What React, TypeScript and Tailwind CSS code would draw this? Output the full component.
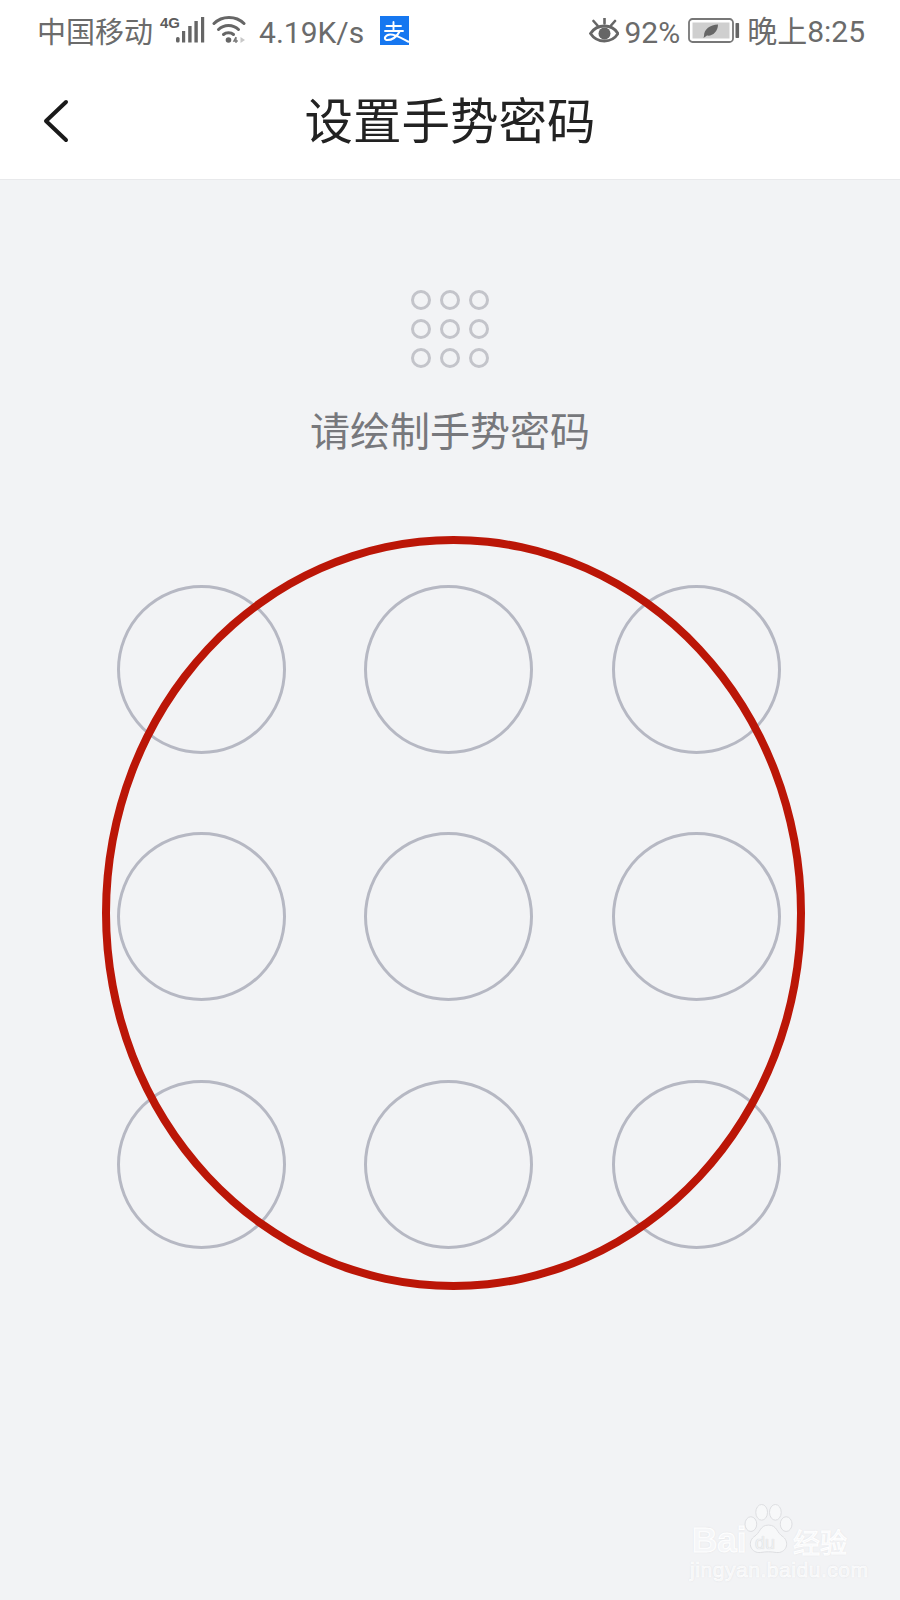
const cjk = "font-['Roboto','Noto_Sans_CJK_SC',sans-serif]";

function Signal() {
  return (
    <div className="relative w-[46px] h-[30px]">
      <span className="absolute left-0 top-[0px] text-[15px] leading-[14px] font-bold text-[#5c5c5c] font-['Liberation_Sans_Narrow','Liberation_Sans',sans-serif]">4G</span>
      <svg viewBox="0 0 46 30" className="absolute inset-0 w-[46px] h-[30px]" fill="#666">
        <rect x="16" y="21" width="3.6" height="5.5" rx="1.6" />
        <rect x="22" y="15" width="3.2" height="11.5" />
        <rect x="28.2" y="10" width="3.4" height="16.5" />
        <rect x="34.4" y="5" width="3.4" height="21.5" />
        <rect x="41" y="1" width="3.2" height="25.5" />
      </svg>
    </div>
  );
}

function Wifi() {
  return (
    <svg viewBox="0 0 36 30" className="w-[36px] h-[30px]" fill="none" stroke="#666" strokeWidth="3" strokeLinecap="round">
      <path d="M2 7.5 C10 -0.5 24 -0.5 32 7.5" />
      <path d="M6.5 13.5 C12 8 21 8 26.5 13.5" />
      <path d="M11.5 18.5 C14 16.3 19 16.3 21.5 18.5" />
      <circle cx="16.5" cy="24" r="2.8" fill="#666" stroke="none" />
      <path d="M24 27 L24 21 M25.8 25 L21.8 25 L24 21" strokeWidth="1.3" stroke="#777" strokeLinecap="butt" />
      <path d="M28.5 21 L33 24 L28.5 27 Z" fill="#c8c8c8" stroke="none" />
    </svg>
  );
}

function Alipay() {
  return (
    <svg viewBox="0 0 29 29" className="w-[29px] h-[29px]" fill="none" stroke="#fff" strokeWidth="1.9" strokeLinecap="round">
      <rect x="0" y="0" width="29" height="29" fill="#1677f0" stroke="none" />
      <path d="M13.5 6 V15" />
      <path d="M6.5 10 H21" />
      <path d="M5 15 H23" />
      <path d="M19.5 15.5 C17 21 11.5 24.5 6.5 24 C3.5 23 5 19 10 18.5 C15 18 23 23 29 26" strokeWidth="2.1" strokeLinecap="butt" />
    </svg>
  );
}

function Eye() {
  return (
    <svg viewBox="0 0 30 26" className="w-[30px] h-[26px]" fill="none" stroke="#666">
      <path d="M1.5 15.5 C8 5.5 23 5.5 29 15.5 C23 25.5 8 25.5 1.5 15.5 Z" strokeWidth="2.8" />
      <circle cx="15.5" cy="15.5" r="6" fill="#666" stroke="none" />
      <path d="M4.5 3 L8.5 7.5 M15.5 0 L15.5 5.5 M26 3 L22 7.5" strokeWidth="2.6" strokeLinecap="round" />
    </svg>
  );
}

function Battery() {
  return (
    <svg viewBox="0 0 52 26" className="w-[52px] h-[26px]">
      <rect x="1" y="1" width="44" height="23" rx="3.5" fill="none" stroke="#777" strokeWidth="1.8" />
      <rect x="4.5" y="4.5" width="37" height="16" fill="#cfcfcf" />
      <rect x="47.5" y="5" width="3.6" height="15" rx="0.8" fill="#666" />
      <path d="M16 18 C16 11 22 7 30 6.5 C30 14 24 18.5 19 17.5 L15.5 20 Z" fill="#666" />
    </svg>
  );
}

function Watermark() {
  const outline = "text-[#f5f6f8] [-webkit-text-stroke:1px_#ffffff] [text-shadow:0_0_2px_#d4d5d8]";
  return (
    <div className="absolute left-[690px] top-[1503px] w-[170px] h-[78px]">
      <span className={`absolute left-[2px] top-[18px] text-[35px] leading-[38px] font-bold font-['Liberation_Sans',sans-serif] ${outline}`}>Bai</span>
      <svg viewBox="0 0 50 52" className="absolute left-[54px] top-0 w-[49px] h-[52px]" fill="#f7f8f9" stroke="#dcdde0" strokeWidth="1">
        <ellipse cx="7" cy="21" rx="6" ry="7.5" />
        <ellipse cx="18" cy="9" rx="6" ry="8" />
        <ellipse cx="32" cy="9" rx="6" ry="8" />
        <ellipse cx="43" cy="21" rx="6" ry="7.5" />
        <path d="M25 22 C16 22 17 30 10 34 C3 40 7 51 17 50 C22 49 28 49 33 50 C43 51 47 40 40 34 C33 30 34 22 25 22 Z" />
      </svg>
      <span className="absolute left-[65px] top-[30px] text-[18px] leading-[20px] text-[#eff0f2] [text-shadow:0_0_1px_#c9cacd] font-['Liberation_Sans',sans-serif]">du</span>
      <span className={`absolute left-[103px] top-[24px] text-[27px] leading-[29px] font-['Noto_Sans_CJK_SC',sans-serif] ${outline}`}>经验</span>
      <span className="absolute left-0 top-[55px] text-[21px] leading-[24px] tracking-[0.55px] font-['Liberation_Sans',sans-serif] text-[#f4f5f7] [-webkit-text-stroke:0.6px_#ffffff] [text-shadow:0_0_2px_#d4d5d8]">jingyan.baidu.com</span>
    </div>
  );
}

export default function App() {
  const small = Array.from({ length: 9 });
  const big = Array.from({ length: 9 });
  return (
    <div className={`relative w-[900px] h-[1600px] overflow-hidden bg-[#f2f3f5] ${cjk}`}>
      <header className="bg-white h-[180px] border-b border-[#e8e9eb]">
        <div className="h-[62px] pl-[37px] pr-[35px] flex items-center justify-between text-[#6b6b6b] text-[30px] leading-[40px]">
          <div className="flex items-center">
            <span className="text-[29px] pt-[4px]">中国移动</span>
            <div className="ml-[7px]"><Signal /></div>
            <div className="ml-[6px]"><Wifi /></div>
            <span className="ml-[11px] pt-[4px]">4.19K/s</span>
            <div className="ml-[16px] mt-[-2px]"><Alipay /></div>
          </div>
          <div className="flex items-center">
            <Eye />
            <span className="ml-[5px] pt-[3px]">92%</span>
            <div className="ml-[8px]"><Battery /></div>
            <span className="ml-[7px] pt-[2px]">晚上8:25</span>
          </div>
        </div>
        <div className="relative h-[117px] flex items-center justify-center">
          <svg viewBox="0 0 30 48" className="absolute left-[41px] top-[35px] w-[30px] h-[48px]" fill="none" stroke="#1a1a1a" strokeWidth="4" strokeLinecap="round" strokeLinejoin="round">
            <path d="M25 5 L5 24 L25 43" />
          </svg>
          <h1 className="text-[48.5px] leading-[60px] font-normal text-[#222] pt-[5px]">设置手势密码</h1>
        </div>
      </header>

      <main className="flex flex-col items-center">
        <div className="mt-[110px] grid grid-cols-3 gap-[9.5px]">
          {small.map((_, i) => (
            <div key={i} className="w-[19.5px] h-[19.5px] rounded-full border-[3px] border-[#c3c4ca]" />
          ))}
        </div>
        <p className="mt-[41px] text-[40px] leading-[48px] text-[#77787c]">请绘制手势密码</p>
        <div className="mt-[128px] grid grid-cols-3 gap-[78.5px] ml-[-3px]">
          {big.map((_, i) => (
            <div key={i} className="w-[169px] h-[169px] rounded-full border-[3px] border-[#b6b8c3]" />
          ))}
        </div>
      </main>

      <div className="absolute left-[102px] top-[536px] w-[703px] h-[754px] rounded-[50%] border-[8px] border-[#bb1607]" />
      <Watermark />
    </div>
  );
}
